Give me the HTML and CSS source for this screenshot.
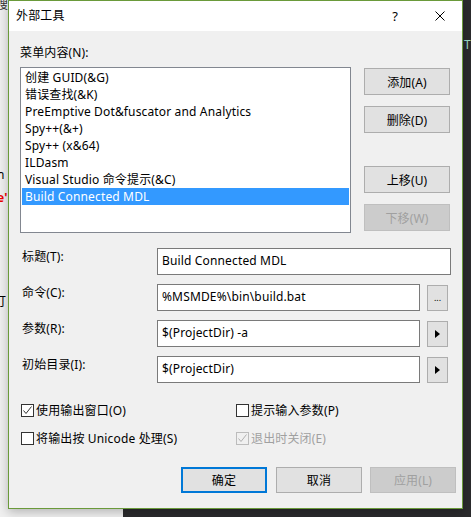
FILE: index.html
```html
<!DOCTYPE html>
<html lang="zh-CN">
<head>
  <meta charset="UTF-8">
  <title>外部工具</title>
  <link rel="stylesheet" href="styles.css">
</head>
<body>
  <div class="desktop">
    <!-- ventana de fondo (Visual Studio) -->
    <div class="behind"></div>
    <span class="frag frag-top">搜</span>
    <span class="frag frag-n">n</span>
    <span class="frag frag-red">e'</span>
    <span class="frag frag-da">打</span>
    <span class="frag frag-t">T</span>

    <div class="dialog">
      <div class="titlebar">
        <span class="title">外部工具</span>
        <span class="help">?</span>
        <svg class="close" width="10" height="10" viewBox="0 0 10 10">
          <path d="M0.5 0.5 L9.5 9.5 M9.5 0.5 L0.5 9.5" stroke="#000" stroke-width="1" fill="none"/>
        </svg>
      </div>

      <div class="content">
        <div class="caption">菜单内容(N):</div>

        <div class="list-row">
          <div class="listbox">
            <div class="item">创建 GUID(&amp;G)</div>
            <div class="item">错误查找(&amp;K)</div>
            <div class="item">PreEmptive Dot&amp;fuscator and Analytics</div>
            <div class="item">Spy++(&amp;+)</div>
            <div class="item">Spy++ (x&amp;64)</div>
            <div class="item">ILDasm</div>
            <div class="item">Visual Studio 命令提示(&amp;C)</div>
            <div class="item selected">Build Connected MDL</div>
          </div>
          <div class="side-buttons">
            <button class="btn btn-add">添加(A)</button>
            <button class="btn btn-del">删除(D)</button>
            <button class="btn btn-up">上移(U)</button>
            <button class="btn btn-down" disabled>下移(W)</button>
          </div>
        </div>

        <div class="fields">
          <div class="label">标题(T):</div>
          <div class="field"><div class="input wide">Build Connected MDL</div></div>

          <div class="label">命令(C):</div>
          <div class="field">
            <div class="input">%MSMDE%\bin\build.bat</div>
            <button class="mini dots">...</button>
          </div>

          <div class="label">参数(R):</div>
          <div class="field">
            <div class="input">$(ProjectDir) -a</div>
            <button class="mini"><span class="arrow"></span></button>
          </div>

          <div class="label">初始目录(I):</div>
          <div class="field">
            <div class="input">$(ProjectDir)</div>
            <button class="mini"><span class="arrow"></span></button>
          </div>
        </div>

        <div class="checks">
          <label class="check">
            <span class="box"><svg width="11" height="11" viewBox="0 0 11 11"><path d="M1.5 5.5 L4 8.5 L9.5 1.5" stroke="#333" stroke-width="1" fill="none"/></svg></span>
            使用输出窗口(O)
          </label>
          <label class="check">
            <span class="box"></span>
            提示输入参数(P)
          </label>
          <label class="check">
            <span class="box"></span>
            将输出按 Unicode 处理(S)
          </label>
          <label class="check disabled">
            <span class="box"><svg width="11" height="11" viewBox="0 0 11 11"><path d="M1.5 5.5 L4 8.5 L9.5 1.5" stroke="#b0b0b0" stroke-width="1" fill="none"/></svg></span>
            退出时关闭(E)
          </label>
        </div>

        <div class="footer">
          <button class="btn btn-ok">确定</button>
          <button class="btn btn-cancel">取消</button>
          <button class="btn btn-apply" disabled>应用(L)</button>
        </div>
      </div>
    </div>
  </div>
</body>
</html>
```

FILE: styles.css
```css
body {
  margin: 0;
  font-family: "Noto Sans", "Noto Sans CJK SC", sans-serif;
  font-size: 12px;
  letter-spacing: 0.15px;
  color: #000;
  background-color: #f0f0f0;
}

.desktop {
  position: relative;
  width: 471px;
  height: 517px;
  overflow: hidden;
  padding-left: 8px;
  box-sizing: border-box;
}

.behind {
  position: absolute;
  left: 123px;
  top: 0;
  right: 0;
  bottom: 0;
  background-color: #2b2b2d;
}

.frag {
  position: absolute;
  font-size: 12px;
  line-height: 14px;
}

.frag-top { left: -4px; top: -2px; color: #333; }
.frag-n { left: -3px; top: 168px; }
.frag-red { left: -3px; top: 191px; color: #e00; font-weight: bold; }
.frag-da { left: -6px; top: 295px; }
.frag-t { left: 464px; top: 38px; color: #9cdcc8; }

.dialog {
  position: relative;
  width: 455px;
  height: 509px;
  box-sizing: border-box;
  border: 1px solid #6a9a3a;
  background-color: #f0f0f0;
  box-shadow: 0 3px 10px rgba(0,0,0,0.25);
  display: flex;
  flex-direction: column;
}

.titlebar {
  height: 30px;
  background-color: white;
  display: flex;
  align-items: center;
  padding-left: 7px;
}

.title {
  flex: 1;
  line-height: 16px;
}

.help {
  font-size: 13px;
  margin-right: 37px;
}

.close {
  margin-right: 17px;
}

.content {
  padding: 14px 6px 0 11px;
}

.caption {
  line-height: 16px;
}

.list-row {
  display: flex;
  margin-top: 6px;
}

.listbox {
  width: 331px;
  height: 166px;
  box-sizing: border-box;
  border: 1px solid #828790;
  background-color: white;
  padding: 1px 1px;
}

.item {
  height: 17px;
  line-height: 17px;
  padding-left: 3px;
  white-space: nowrap;
}

.item.selected {
  background-color: #3399ff;
  color: white;
}

.side-buttons {
  display: flex;
  flex-direction: column;
  margin-left: 13px;
}

.btn {
  width: 86px;
  height: 27px;
  background-color: #e1e1e1;
  border: 1px solid #adadad;
  font-family: inherit;
  font-size: 12px;
  letter-spacing: inherit;
  color: #000;
  padding: 0;
}

.btn:disabled {
  background-color: #cccccc;
  border-color: #bfbfbf;
  color: #a0a0a0;
}

.btn-add { margin-top: 1px; }
.btn-del { margin-top: 11px; }
.btn-up { margin-top: 33px; }
.btn-down { margin-top: 11px; }

.fields {
  display: grid;
  grid-template-columns: 137px 1fr;
  row-gap: 9px;
  margin-top: 15px;
}

.label {
  line-height: 16px;
  padding-top: 1px;
  padding-left: 2px;
}

.field {
  display: flex;
  align-items: center;
}

.input {
  width: 263px;
  height: 27px;
  box-sizing: border-box;
  border: 1px solid #7a7a7a;
  background-color: white;
  padding-left: 4px;
  line-height: 24px;
  white-space: nowrap;
}

.input.wide {
  width: 294px;
}

.mini {
  width: 21px;
  height: 26px;
  margin-left: 7px;
  background-color: #e1e1e1;
  border: 1px solid #adadad;
  padding: 0;
  display: flex;
  align-items: center;
  justify-content: center;
  font-family: inherit;
}

.dots {
  font-size: 9px;
  align-items: flex-end;
  padding-bottom: 6px;
  box-sizing: border-box;
}

.arrow {
  width: 0;
  height: 0;
  border-left: 5px solid #000;
  border-top: 4px solid transparent;
  border-bottom: 4px solid transparent;
}

.checks {
  display: grid;
  grid-template-columns: 215px 1fr;
  grid-auto-rows: 20px;
  row-gap: 8px;
  margin-top: 17px;
  padding-left: 1px;
}

.check {
  display: flex;
  align-items: center;
  white-space: nowrap;
}

.box {
  width: 13px;
  height: 13px;
  box-sizing: border-box;
  border: 1px solid #333;
  background-color: white;
  margin-right: 2px;
  display: flex;
  align-items: center;
  justify-content: center;
}

.check.disabled {
  color: #a0a0a0;
}

.check.disabled .box {
  border-color: #bcbcbc;
  background-color: #f0f0f0;
}

.footer {
  display: flex;
  justify-content: flex-end;
  margin-top: 19px;
}

.footer .btn {
  height: 26px;
}

.btn-ok {
  border: 2px solid #0078d7;
}

.btn-cancel { margin-left: 9px; }
.btn-apply { margin-left: 8px; }
```
